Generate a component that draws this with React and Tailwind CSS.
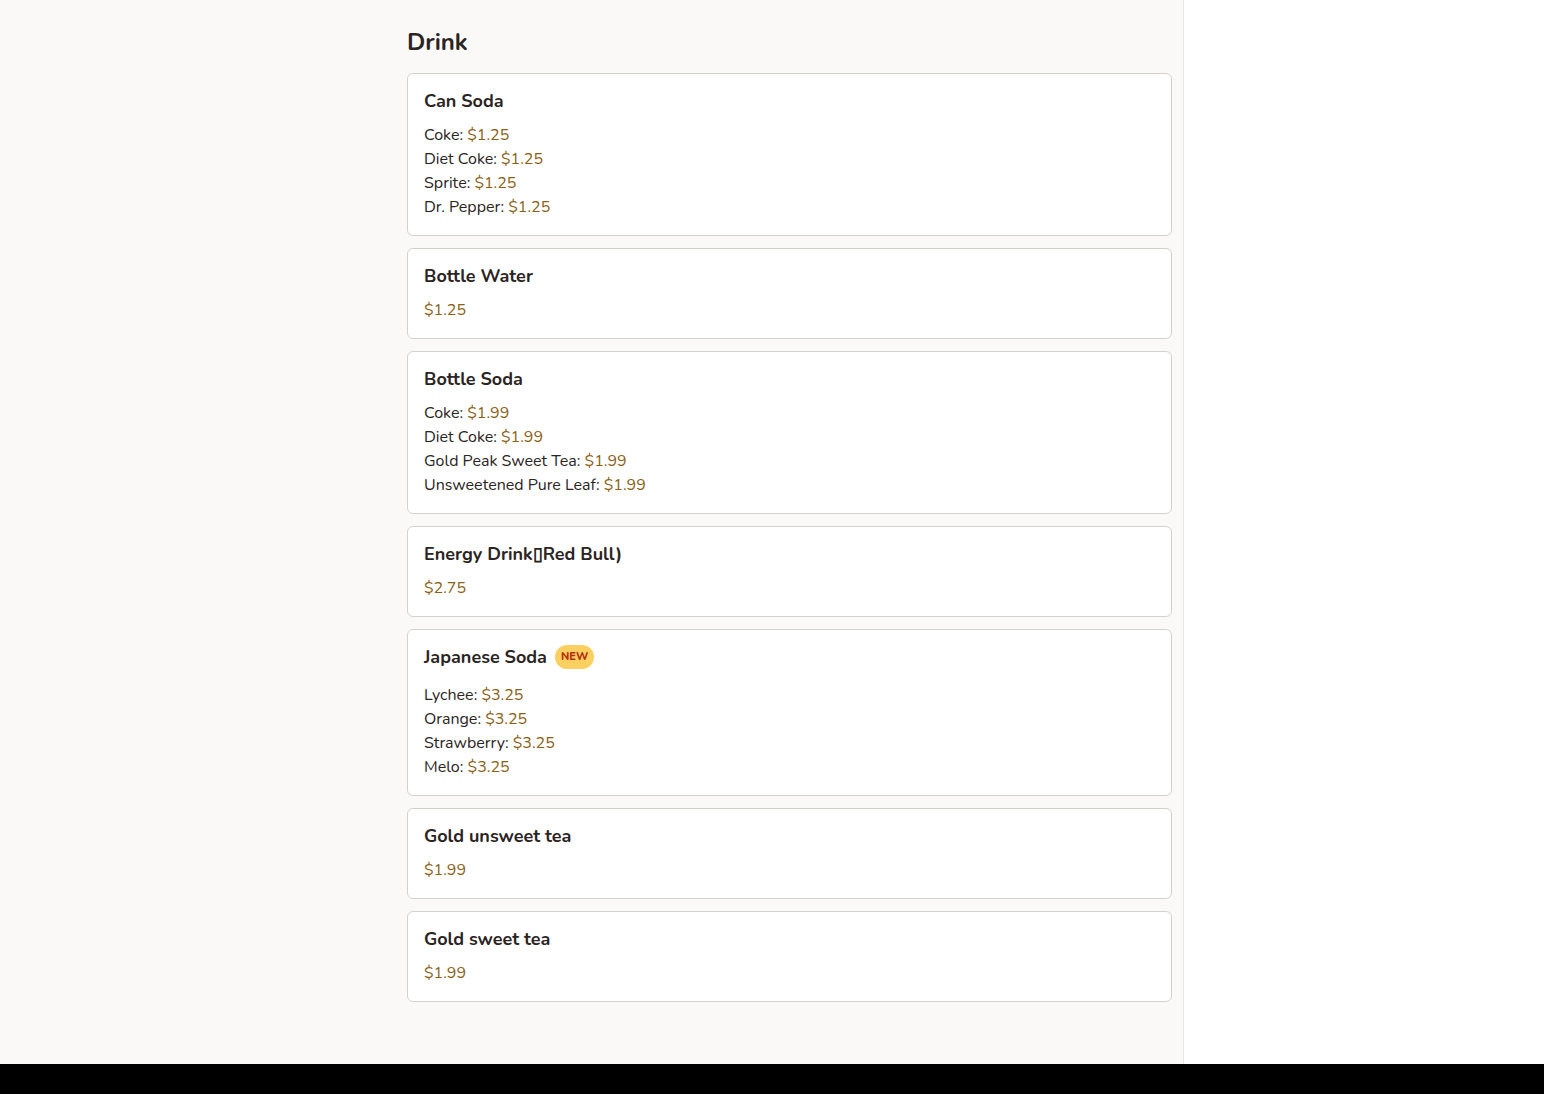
import React from "react";

const sections = [
  { title: "Can Soda", items: [["Coke", "$1.25"], ["Diet Coke", "$1.25"], ["Sprite", "$1.25"], ["Dr. Pepper", "$1.25"]] },
  { title: "Bottle Water", price: "$1.25" },
  { title: "Bottle Soda", items: [["Coke", "$1.99"], ["Diet Coke", "$1.99"], ["Gold Peak Sweet Tea", "$1.99"], ["Unsweetened Pure Leaf", "$1.99"]] },
  { title: "Energy Drink\u25AFRed Bull)", price: "$2.75" },
  { title: "Japanese Soda", badge: "NEW", items: [["Lychee", "$3.25"], ["Orange", "$3.25"], ["Strawberry", "$3.25"], ["Melo", "$3.25"]] },
  { title: "Gold unsweet tea", price: "$1.99" },
  { title: "Gold sweet tea", price: "$1.99" },
];

export default function App() {
  return (
    <div className="flex h-[1094px] flex-col text-[#2a2422]" style={{ fontFamily: '"Nunito", "Lato", "Noto Sans", sans-serif' }}>
      <div className="flex flex-1">
        <div className="w-[1184px] border-r border-[#e8e6e3] bg-[#faf9f7] pl-[407px] pr-[11px] pt-[26px]">
          <h1 className="mb-[15px] text-2xl font-bold leading-8">Drink</h1>
          <div className="flex flex-col gap-3">
            {sections.map((s) => (
              <div key={s.title} className="rounded-md border border-[#d4d1cd] bg-white p-4">
                {s.badge ? (
                  <div className="-mt-px mb-[14px] flex h-6 items-center gap-2">
                    <h2 className="text-lg font-bold leading-[23px]">{s.title}</h2>
                    <span className="flex h-6 items-center rounded-full bg-[#fcd060] px-1.5 text-[11px] font-extrabold text-[#b42f10]">{s.badge}</span>
                  </div>
                ) : (
                  <h2 className="mb-2.5 text-lg font-bold leading-[23px]">{s.title}</h2>
                )}
                {s.items ? (
                  <ul>
                    {s.items.map(([n, p]) => (
                      <li key={n} className="text-base leading-6">
                        {n}: <span className="text-[#8a5f16]">{p}</span>
                      </li>
                    ))}
                  </ul>
                ) : (
                  <div className="text-base leading-6 text-[#8a5f16]">{s.price}</div>
                )}
              </div>
            ))}
          </div>
        </div>
        <div className="flex-1 bg-white" />
      </div>
      <div className="h-[30px] bg-black" />
    </div>
  );
}
